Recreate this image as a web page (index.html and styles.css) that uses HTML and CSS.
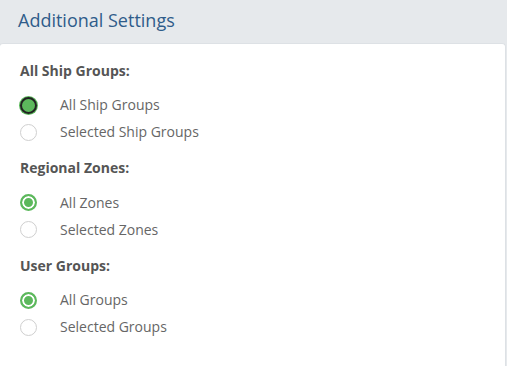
FILE: index.html
```html
<!DOCTYPE html>
<html>

<head>
  <meta charset="UTF-8">
  <title>Additional Settings</title>
  <link rel="stylesheet" href="styles.css">
</head>

<body>
  <div class="panel-header">
    <h2 class="panel-title">Additional Settings</h2>
  </div>

  <div class="panel-body">
    <div class="setting-group">
      <div class="group-label">All Ship Groups:</div>
      <label class="radio-row">
        <input type="radio" name="ships" class="radio focused" checked>
        <span class="radio-text">All Ship Groups</span>
      </label>
      <label class="radio-row">
        <input type="radio" name="ships" class="radio">
        <span class="radio-text">Selected Ship Groups</span>
      </label>
    </div>

    <div class="setting-group">
      <div class="group-label">Regional Zones:</div>
      <label class="radio-row">
        <input type="radio" name="zones" class="radio" checked>
        <span class="radio-text">All Zones</span>
      </label>
      <label class="radio-row">
        <input type="radio" name="zones" class="radio">
        <span class="radio-text">Selected Zones</span>
      </label>
    </div>

    <div class="setting-group">
      <div class="group-label">User Groups:</div>
      <label class="radio-row">
        <input type="radio" name="users" class="radio" checked>
        <span class="radio-text">All Groups</span>
      </label>
      <label class="radio-row">
        <input type="radio" name="users" class="radio">
        <span class="radio-text">Selected Groups</span>
      </label>
    </div>
  </div>
</body>

</html>
```

FILE: styles.css
```css
html,
body {
  height: 100%;
}

body {
  margin: 0;
  font-family: "Open Sans", sans-serif;
  background-color: #e6e9ec;
  display: flex;
  flex-direction: column;
}

.panel-header {
  padding: 8px 18px 11px;
}

.panel-title {
  margin: 0;
  font-size: 18px;
  font-weight: 400;
  line-height: 24px;
  color: #2f5c8a;
}

.panel-body {
  flex: 1;
  margin: 0 1px 0 -1px;
  padding: 17.5px 20px 0 20px;
  background: #fff;
  border: 1px solid #dde1e5;
  border-bottom: none;
  border-radius: 4px 4px 0 0;
}

.setting-group {
  margin-bottom: 13.5px;
}

.group-label {
  font-size: 14px;
  font-weight: 700;
  line-height: 18px;
  color: #555;
  margin-bottom: 12px;
}

.radio-row {
  display: flex;
  align-items: center;
  height: 27px;
  cursor: pointer;
}

.radio {
  appearance: none;
  -webkit-appearance: none;
  box-sizing: border-box;
  width: 17px;
  height: 17px;
  margin: 0 23px 0 0;
  border: 1px solid #cfcfcf;
  border-radius: 50%;
  background: #fff;
}

.radio:checked {
  border: 2px solid #5cb85c;
  background: #5cb85c;
  box-shadow: inset 0 0 0 2px #fff;
}

.radio.focused:checked {
  border-color: #222;
  box-shadow: 0 0 0 1px #5cb85c;
}

.radio-text {
  font-size: 14px;
  line-height: 18px;
  color: #666;
}
```
